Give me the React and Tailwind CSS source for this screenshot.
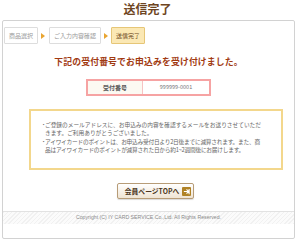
const font = { fontFamily: '"Noto Sans CJK JP", "Noto Sans", sans-serif' };

const Crumb = ({ label, active, width }) => (
    <div
        className={`flex items-center justify-center h-[17px] text-[6px] rounded-[1px] border ${
            active
                ? 'bg-[#fbe8b4] border-[#e6c677] text-[#6e4a22]'
                : 'bg-white border-[#dddddd] text-[#9a9a9a]'
        } ${width}`}
    >
        {label}
    </div>
);

const Arrow = () => (
    <span className="w-0 h-0 border-y-[3px] border-y-transparent border-l-[4px] border-l-[#e9a531]" />
);

const Bullet = () => <span className="inline-flex justify-center w-[3px] -ml-[3px]">・</span>;

const App = () => {
    return (
        <div className="w-[295px] h-[240px] bg-white overflow-hidden" style={font}>
            {/* Title */}
            <h1 className="h-[20px] text-center text-[12px] font-bold leading-[18px] text-[#6e4522]">
                送信完了
            </h1>

            <div className="ml-[2px] w-[293px] h-[219px] border border-[#d2d2d2] rounded-[2px] flex flex-col">
                {/* Steps */}
                <div className="flex items-center gap-[3px] pl-[1px] pt-[6px]">
                    <Crumb label="商品選択" width="w-[34px]" />
                    <Arrow />
                    <Crumb label="ご入力内容確認" width="w-[52px] ml-[1px]" />
                    <Arrow />
                    <Crumb label="送信完了" active width="w-[34px]" />
                </div>

                {/* Message */}
                <p className="mt-[13px] text-center text-[8.8px] font-bold leading-[10px] text-[#a13a12] tracking-[0.02em]">
                    下記の受付番号でお申込みを受け付けました。
                </p>

                {/* Number */}
                <div className="mt-[12px] mx-auto flex w-[125px] h-[17px] border-2 border-[#f6a3a3]">
                    <div className="w-[55px] flex items-center justify-center bg-[#fcf9f2] border-r border-[#f6c3c3] text-[6px] font-bold text-[#555555]">
                        受付番号
                    </div>
                    <div className="flex-1 flex items-center justify-center text-[5.5px] text-[#777777]">
                        999999-0001
                    </div>
                </div>

                {/* Notes */}
                <div className="mt-[13px] ml-[26px] w-[254px] h-[61px] border-2 border-[#f3d78c] pt-[10px] pl-[14px] text-[5.7px] leading-[7.6px] text-[#666666] whitespace-nowrap">
                    <p className="mb-[2px]">
                        <Bullet />ご登録のメールアドレスに、お申込みの内容を確認するメールをお送りさせていただ
                        <br />
                        きます。ご利用ありがとうございました。
                    </p>
                    <p className="tracking-[-0.04em]">
                        <Bullet />アイワイカードのポイントは、お申込み受付日より2日後までに減算されます。また、商
                        <br />
                        品はアイワイカードのポイントが減算された日から約1~2週間後にお届けします。
                    </p>
                </div>

                {/* Button */}
                <div className="mt-[13px] flex justify-center">
                    <button className="ml-[14px] flex items-center gap-[3px] h-[16px] pl-[7px] pr-[2px] rounded-[2px] border border-[#b79c77] bg-gradient-to-b from-white to-[#efe4d3] shadow-[0_1px_1px_rgba(0,0,0,0.15)] text-[6.8px] font-bold text-[#4a3420]">
                        会員ページTOPへ
                        <span className="flex items-center justify-center w-[9px] h-[9px] bg-[#b08225] rounded-[1px]">
                            <svg width="7" height="7" viewBox="0 0 8 8" fill="none" stroke="white" strokeWidth="1.3">
                                <path d="M1 4h5M4 1.5L6.5 4 4 6.5M7 1v6" />
                            </svg>
                        </span>
                    </button>
                </div>

                {/* Footer */}
                <div
                    className="mt-[12px] h-[13px] border-t border-[#e2e2e2] flex items-center justify-center text-[5.2px] text-[#8a8a8a] bg-[repeating-linear-gradient(135deg,#f1f1f1_0,#f1f1f1_1px,#fbfbfb_1px,#fbfbfb_3px)]"
                    style={{ fontFamily: '"Liberation Sans", Arial, sans-serif' }}
                >
                    Copyright (C) IY CARD SERVICE Co.,Ltd. All Rights Reserved.
                </div>
            </div>
        </div>
    );
};

export default App;
